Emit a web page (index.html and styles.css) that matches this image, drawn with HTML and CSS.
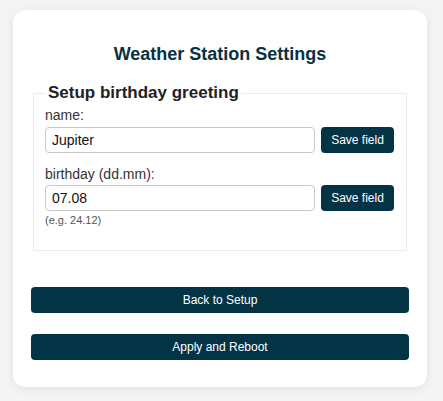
FILE: index.html
```html
<!DOCTYPE html>
<html>
<head>
<meta charset="utf-8">
<link rel="stylesheet" href="styles.css">
</head>
<body>
<div class="card">
  <h2 class="title">Weather Station Settings</h2>
  <fieldset class="group">
    <legend class="legend">Setup birthday greeting</legend>
    <label class="label">name:</label>
    <div class="row">
      <input class="field" type="text" value="Jupiter">
      <button class="save">Save field</button>
    </div>
    <label class="label label-gap">birthday (dd.mm):</label>
    <div class="row">
      <input class="field" type="text" value="07.08">
      <button class="save">Save field</button>
    </div>
    <div class="hint">(e.g. 24.12)</div>
  </fieldset>
  <div class="actions">
    <button class="wide">Back to Setup</button>
    <button class="wide">Apply and Reboot</button>
  </div>
</div>
</body>
</html>
```
FILE: styles.css
```css
html, body {
  margin: 0;
  padding: 0;
  background: #f4f4f4;
  font-family: "Liberation Sans", Arial, sans-serif;
}
body {
  padding: 10px 16px 14px 13px;
}
.card {
  background: #fff;
  border-radius: 12px;
  box-shadow: 0 2px 10px rgba(0, 0, 0, 0.08);
  padding: 20px 18px 27px;
}
.title {
  margin: 14px 0 18px;
  text-align: center;
  font-size: 18px;
  line-height: 21px;
  font-weight: bold;
  color: #0a3140;
}
.group {
  margin: 0 2px;
  border: 1px solid #ececec;
  padding: 4px 12px 23px 11px;
}
.legend {
  font-size: 17px;
  line-height: 20px;
  font-weight: bold;
  color: #222;
  padding: 0 2px;
  margin-left: 1px;
}
.label {
  display: block;
  font-size: 14px;
  line-height: 16px;
  color: #333;
  margin-bottom: 4px;
}
.label-gap {
  margin-top: 13px;
  margin-bottom: 3px;
}
.row {
  display: flex;
  gap: 6px;
}
.field {
  flex: 1;
  min-width: 0;
  box-sizing: border-box;
  height: 26px;
  border: 1px solid #c8c8c8;
  border-radius: 4px;
  padding: 4px 6px;
  font-family: "Liberation Sans", Arial, sans-serif;
  font-size: 14px;
  color: #111;
  background: #fff;
}
.save {
  width: 73px;
  height: 26px;
  border: none;
  border-radius: 4px;
  background: #033446;
  color: #fff;
  font-family: "Liberation Sans", Arial, sans-serif;
  font-size: 12px;
  padding: 0;
}
.hint {
  font-size: 11px;
  line-height: 13px;
  color: #555;
  margin-top: 3px;
}
.actions {
  display: flex;
  flex-direction: column;
  gap: 21px;
  margin-top: 36px;
}
.wide {
  height: 26px;
  border: none;
  border-radius: 4px;
  background: #033446;
  color: #fff;
  font-family: "Liberation Sans", Arial, sans-serif;
  font-size: 12px;
  padding: 0;
}
```
